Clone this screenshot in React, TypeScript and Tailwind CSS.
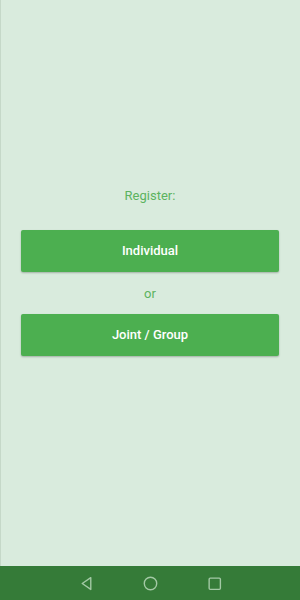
export default function App() {
  return (
    <div
      className="flex h-[600px] w-[300px] flex-col bg-[#d9ebdd]"
      style={{ fontFamily: "Roboto, 'Liberation Sans', sans-serif" }}
    >
      <main className="flex flex-1 flex-col border-l border-[#c5d8c8] pl-[20px] pr-[21px] pt-[187px]">
        <p className="text-center text-[13px] leading-[18px] text-[#5cb35f]">Register:</p>
        <button className="mt-[25px] h-[42px] w-full rounded-[2px] bg-[#4caf50] text-[13px] font-medium text-white shadow-[0_1px_2px_rgba(0,0,0,0.25)]">
          Individual
        </button>
        <p className="mt-[13px] text-center text-[13px] leading-[18px] text-[#5cb35f]">or</p>
        <button className="mt-[11px] h-[42px] w-full rounded-[2px] bg-[#4caf50] text-[13px] font-medium text-white shadow-[0_1px_2px_rgba(0,0,0,0.25)]">
          Joint / Group
        </button>
      </main>
      <nav className="flex h-[34px] items-center justify-center gap-[49px] bg-[#357b38]">
        <svg width="15" height="15" viewBox="0 0 14 14" fill="none" stroke="#a3c9a5" strokeWidth="1.3">
          <path d="M11 1.5 L3 7 L11 12.5 Z" strokeLinejoin="round" />
        </svg>
        <svg width="15" height="15" viewBox="0 0 14 14" fill="none" stroke="#a3c9a5" strokeWidth="1.3">
          <circle cx="7" cy="7" r="5.8" />
        </svg>
        <svg width="15" height="15" viewBox="0 0 14 14" fill="none" stroke="#a3c9a5" strokeWidth="1.3">
          <rect x="2" y="2" width="10.5" height="10.5" rx="1" />
        </svg>
      </nav>
    </div>
  );
}
